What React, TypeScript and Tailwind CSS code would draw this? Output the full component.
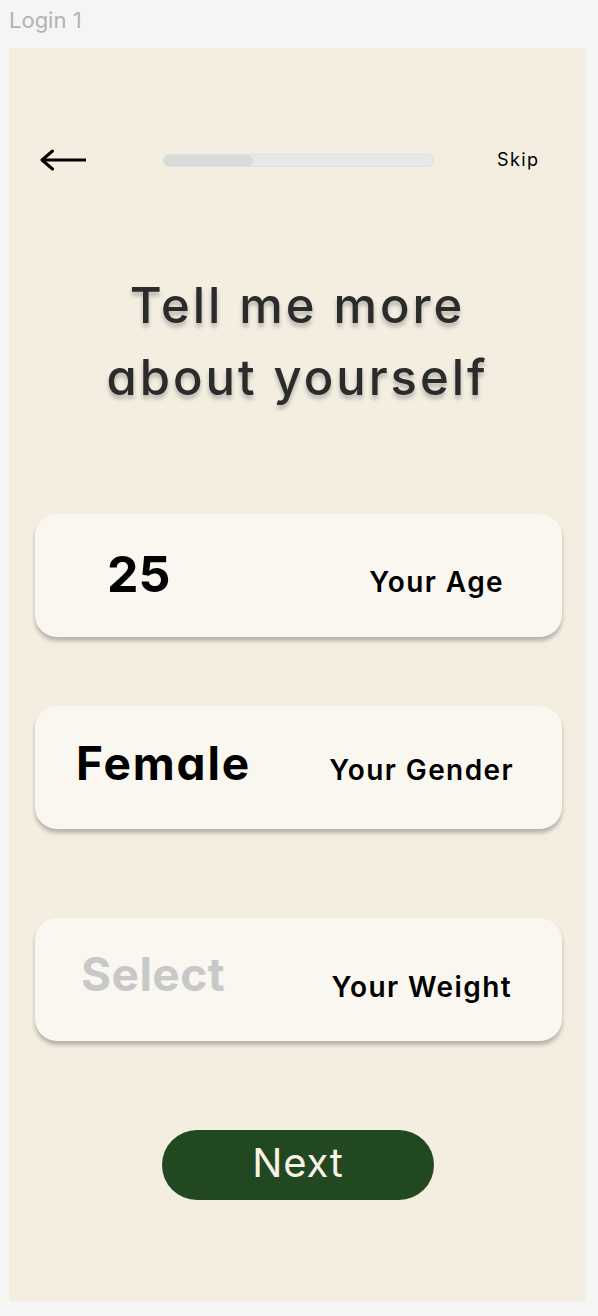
import React from "react";

const font = "font-['Inter','Noto_Sans',sans-serif] [font-feature-settings:'cv11','ss01']";

function Card({
  value,
  label,
  valueClass,
  labelClass,
}: {
  value: string;
  label: string;
  valueClass: string;
  labelClass: string;
}) {
  return (
    <div className="ml-[26px] flex h-[123px] w-[527px] items-center justify-between rounded-[22px] bg-[#f9f7f0] shadow-[0_4px_4px_rgba(0,0,0,0.25)]">
      <span className={valueClass}>{value}</span>
      <span className={labelClass}>{label}</span>
    </div>
  );
}

export default function App() {
  return (
    <div className={`h-[1316px] w-[598px] overflow-hidden bg-[#f5f5f5] ${font}`}>
      <div className="pl-[9px] pt-[9px] text-[22px] leading-[22px] text-[#b3b3b3]">Login 1</div>
      <div className="ml-[9px] mt-[17px] flex h-[1253px] w-[577px] flex-col bg-[#f4eee1]">
        {/* header */}
        <div className="mt-[100px] flex h-[24px] items-center pl-[31px]">
          <svg width="46" height="22" viewBox="0 0 46 22" fill="none">
            <path d="M46 11H2" stroke="#000" strokeWidth="3" />
            <path d="M12.5 2L2 11L12.5 20" stroke="#000" strokeWidth="3" strokeLinecap="round" strokeLinejoin="round" />
          </svg>
          <div className="ml-[77px] h-[13px] w-[271px] overflow-hidden rounded-full border border-[#dedede] bg-[#e8e8e8]">
            <div className="h-full w-[89px] rounded-full bg-[#dadada]" />
          </div>
          <span className="ml-[63px] text-[18px] leading-none tracking-[0.08em] text-black">Skip</span>
        </div>

        {/* title */}
        <h1 className="mt-[98px] text-center text-[49px] font-medium leading-[72px] tracking-[0.06em] text-[#2b2b2b] [text-shadow:0_4px_4px_rgba(0,0,0,0.25)]">
          Tell me more
          <br />
          about yourself
        </h1>

        <div className="mt-[100px]">
          <Card
            value="25"
            label="Your Age"
            valueClass="ml-[72px] mb-[3px] text-[50px] font-bold leading-none text-black"
            labelClass="mr-[58px] mt-[13px] text-[28px] font-semibold leading-none tracking-[0.05em] text-black"
          />
        </div>
        <div className="mt-[69px]">
          <Card
            value="Female"
            label="Your Gender"
            valueClass="ml-[41px] mb-[9px] text-[46px] font-bold leading-none tracking-[0.04em] text-black"
            labelClass="mr-[48px] mt-[5px] text-[28px] font-semibold leading-none tracking-[0.05em] text-black"
          />
        </div>
        <div className="mt-[89px]">
          <Card
            value="Select"
            label="Your Weight"
            valueClass="ml-[46px] mb-[11px] text-[46px] font-bold leading-none tracking-[0.01em] text-[#c8c8c8]"
            labelClass="mr-[50px] mt-[15px] text-[28px] font-semibold leading-none tracking-[0.05em] text-black"
          />
        </div>

        <div className="mt-[89px] ml-[153px] flex h-[70px] w-[272px] items-center justify-center rounded-full bg-[#214820]">
          <span className="mb-[4px] text-[40px] leading-none tracking-[0.02em] text-[#f7f3e6]">Next</span>
        </div>
      </div>
    </div>
  );
}
